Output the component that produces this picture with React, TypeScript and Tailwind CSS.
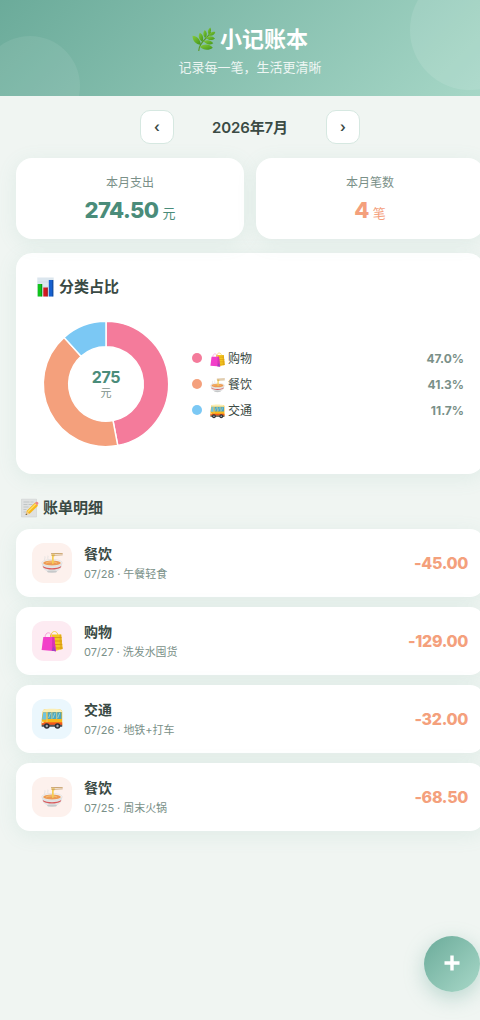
import React from 'react';

type IconProps = { className?: string };

function LeafIcon({ className }: IconProps) {
  return (
    <svg viewBox="0 0 24 24" className={className} aria-hidden="true">
      <defs>
        <linearGradient id="leaf" x1="0" y1="0" x2="1" y2="1">
          <stop offset="0" stopColor="#86cc3a" />
          <stop offset="1" stopColor="#429518" />
        </linearGradient>
      </defs>
      <path d="M6.800 23.500c.3-4 3.200-8.500 6.400-11.500 2.200-2 4-3.800 5.200-6.500" fill="none" stroke="#5a9a28" strokeWidth="1.200" strokeLinecap="round" />
      <g fill="url(#leaf)">
        <path d="M.5 8.800c4.400.2 7.800 3.500 8.300 8.900C3.600 17.700.5 13.500.5 8.800z" />
        <path d="M7.800 5.800c3.200 1.700 4.200 5 2.600 8.900-3.500-1.700-4.600-5.500-2.600-8.900z" />
        <path d="M12.800 3c2.500 2.200 2.700 5.200.5 8-2.500-2.200-2.700-5.500-.5-8z" />
        <path d="M18.300.5c1.500 2.300.9 4.900-1.700 6.900-1.400-2.500-.7-5.200 1.700-6.900z" />
        <path d="M23.300 5c-1 3.200-3.400 4.300-6.700 3.500C17.800 5.500 20.300 4.300 23.300 5z" />
        <path d="M23 11.400c-3 2.500-6.200 2.200-9.100-.6 3-2.200 6.400-2 9.100.6z" />
        <path d="M21.300 16.200c-3.400 2.200-7.200 1.300-9.800-1.900 3.500-1.900 7.300-1.300 9.800 1.900z" />
        <path d="M20.800 20.800c-4.200 3.200-9.500 2.400-13-1 4.300-3.300 9.700-2.900 13 1z" />
      </g>
    </svg>
  );
}

function ChartIcon({ className }: IconProps) {
  return (
    <svg viewBox="0 0 18 20" className={className} aria-hidden="true">
      <rect x=".8" y=".5" width="16.400" height="19" fill="#dbe6ee" />
      <path d="M1 5h16M1 10h16M1 15h16" stroke="#c5d4df" strokeWidth=".5" />
      <rect x="1.200" y="7" width="4.500" height="12.500" fill="#10c31b" />
      <rect x="6.800" y="10.500" width="4.500" height="9" fill="#d41820" />
      <rect x="12.300" y="3" width="4.500" height="16.500" fill="#1660cf" />
      <path d="M5.200 7v12.500M10.800 10.500v9M16.300 3v16.500" stroke="#000" strokeOpacity=".25" strokeWidth="1" />
    </svg>
  );
}

function MemoIcon({ className }: IconProps) {
  return (
    <svg viewBox="0 0 18 20" className={className} aria-hidden="true">
      <path d="M1 1.200h15V19H1z" fill="#dfe1e1" stroke="#c9cccc" strokeWidth=".5" />
      <path d="M3 4h6M10 4h3M3 6.500h4M8 6.500h4M3 9h5M3 11.500h3M3 14h2.500" stroke="#b5baba" strokeWidth=".7" />
      <path d="M5.300 16.700l1-4 8.200-8 3 3-8.300 8z" fill="#f6b81c" />
      <path d="M7.300 13.800l8.200-8" stroke="#ffe16a" strokeWidth="1.200" />
      <path d="M14.300 4.900l1.200-1c1.400-.8 3 .8 2.200 2.100l-1 1.200z" fill="#ee8585" />
      <path d="M5.300 16.700l1-3.500 2.700 2.500z" fill="#edc996" />
      <path d="M5.100 16.900l.4-1.500 1.100 1z" fill="#333" />
    </svg>
  );
}

function BagsIcon({ className }: IconProps) {
  return (
    <svg viewBox="0 0 22 22" className={className} aria-hidden="true">
      <path d="M10 6c0-6 7-6 7 0" fill="none" stroke="#f4cf4d" strokeWidth="1" />
      <path d="M9 4.500h11.200L21.600 19 14 21 9 18z" fill="#f4c821" />
      <path d="M11 7.500h9.500M12 11h9M13 14.500h8.200M14 18h7.500" stroke="#dc9e12" strokeWidth="1" />
      <path d="M18.500 4.500h1.700L21.600 19l-2.600.6z" fill="#d99b14" fillOpacity=".55" />
      <path d="M4 8c0-7 6.500-7 7 0" fill="none" stroke="#f7a1d8" strokeWidth="1" />
      <path d="M2.300 7h10.900l1.800 14.200L.6 20z" fill="#f23fc9" />
      <path d="M11.200 7h2L15 21.200l-4.200-.4z" fill="#d935b4" />
      <path d="M10.800 20.800l1.700-4.500 2.500 4.900z" fill="#9c45c2" />
    </svg>
  );
}

function NoodleIcon({ className }: IconProps) {
  return (
    <svg viewBox="0 0 22 22" className={className} aria-hidden="true">
      <path d="M4 8.500c-1.600-1.200.6-2 0-3.800M7 7c-1-1.200.5-2 0-3" fill="none" stroke="#dedede" strokeWidth=".8" strokeLinecap="round" />
      <path d="M.8 10.800c0 4.800 2.500 7.600 5.800 8.800h8.800c3.300-1.200 5.800-4 5.800-8.800z" fill="#e3e4e5" />
      <path d="M1.700 14c4.500 3 14.100 3 18.600 0l-.6 1.500c-4.300 2.700-13.100 2.700-17.400 0z" fill="#d95a5c" />
      <ellipse cx="11" cy="19.600" rx="5" ry="1.200" fill="#c6c9ca" />
      <ellipse cx="11" cy="10.800" rx="10.200" ry="3.400" fill="#f3f3f3" stroke="#cfd1d2" strokeWidth=".4" />
      <ellipse cx="11" cy="11" rx="8.800" ry="2.600" fill="#ec9a55" />
      <path d="M5 11c3-1.600 8-1.400 11 .1" fill="none" stroke="#f4bd72" strokeWidth="1.100" />
      <path d="M10.500 2.300h3.200v1.800l-1 .6v6.800c-.7.600-1.300.5-1.700 0V4.500z" fill="#f6cf55" />
      <path d="M10 1.200l11.700-.3v.9L10 2.300zM10.500 3l11.200-.5v.8l-11.200.5z" fill="#c39b62" />
    </svg>
  );
}

function BusIcon({ className }: IconProps) {
  return (
    <svg viewBox="0 0 22 22" className={className} aria-hidden="true">
      <path d="M3 1.500h15.500c2 0 2.700 1 2.700 2.600V18H.7v-6.500L1.800 3z" fill="#f9b91c" />
      <path d="M3 1.500c1.500-1 14.500-1 16 0 1.200.2 2 1 2.200 2.400H1.700C1.800 2.500 2.200 1.700 3 1.500z" fill="#fbeeb5" />
      <path d="M2.200 4.200h3.200v7.300H1z" fill="#6fc3de" />
      <path d="M6.500 4.200h14V11h-14z" fill="#4ea6bd" />
      <path d="M7.600 10l2-5M12 10l2-5M16.700 10l2-5" stroke="#8fd2de" strokeWidth="1" />
      <path d="M6 4v10M10.900 4v7M15.700 4v7" stroke="#e9d383" strokeWidth=".8" />
      <path d="M.7 14.300h20.500v2.700H.7z" fill="#f4581d" />
      <path d="M.7 16.800h20.500v2H.7z" fill="#50545a" />
      <circle cx="1.800" cy="14.300" r=".9" fill="#fff4b0" />
      <circle cx="5.800" cy="18" r="2.800" fill="#303238" />
      <circle cx="5.800" cy="18" r="1.200" fill="#a9adb2" />
      <circle cx="16.500" cy="18" r="2.800" fill="#303238" />
      <circle cx="16.500" cy="18" r="1.200" fill="#a9adb2" />
    </svg>
  );
}

const categories = {
  shopping: { name: '购物', color: '#f47b9b', tint: 'bg-[#fdebf2]', dot: 'bg-[#f47b9b]', Icon: BagsIcon },
  food: { name: '餐饮', color: '#f4a07c', tint: 'bg-[#fdf1ed]', dot: 'bg-[#f4a07c]', Icon: NoodleIcon },
  traffic: { name: '交通', color: '#7bc8f4', tint: 'bg-[#ebf7fd]', dot: 'bg-[#7bc8f4]', Icon: BusIcon },
};

type CategoryKey = keyof typeof categories;

const shares: { key: CategoryKey; amount: number }[] = [
  { key: 'shopping', amount: 129 },
  { key: 'food', amount: 113.5 },
  { key: 'traffic', amount: 32 },
];

const records: { key: CategoryKey; date: string; note: string; amount: number }[] = [
  { key: 'food', date: '07/28', note: '午餐轻食', amount: 45 },
  { key: 'shopping', date: '07/27', note: '洗发水囤货', amount: 129 },
  { key: 'traffic', date: '07/26', note: '地铁+打车', amount: 32 },
  { key: 'food', date: '07/25', note: '周末火锅', amount: 68.5 },
];

const total = shares.reduce((sum, s) => sum + s.amount, 0);

function point(r: number, fraction: number) {
  const a = fraction * Math.PI * 2 - Math.PI / 2;
  return `${70 + r * Math.cos(a)} ${70 + r * Math.sin(a)}`;
}

function Donut() {
  let start = 0;
  return (
    <svg viewBox="0 0 140 140" className="w-[140px] h-[140px] shrink-0">
      {shares.map((s) => {
        const from = start;
        const to = start + s.amount / total;
        start = to;
        const large = to - from > 0.5 ? 1 : 0;
        return (
          <path
            key={s.key}
            d={`M${point(62.7, from)}A62.7 62.7 0 ${large} 1 ${point(62.7, to)}L${point(37.3, to)}A37.3 37.3 0 ${large} 0 ${point(37.3, from)}Z`}
            fill={categories[s.key].color}
            stroke="#fff"
            strokeWidth="1.500"
          />
        );
      })}
      <text x="70" y="68.500" textAnchor="middle" fontSize="16" fontWeight="700" letterSpacing="-0.3" fill="#4a8c7a">{Math.round(total)}</text>
      <text x="70" y="83" textAnchor="middle" fontSize="11" fill="#7a9088">元</text>
    </svg>
  );
}

const card = 'bg-white shadow-[0_4px_20px_rgba(107,171,154,0.12)]';

export default function App() {
  return (
    <div className="w-full h-[1020px] overflow-hidden bg-[#f0f5f2] text-[#3a4a44] font-['Inter','Noto_Sans_CJK_SC',sans-serif]">
      <div className="w-[500px] h-full relative">
        {/* Header */}
        <header className="relative h-24 overflow-hidden pt-6 text-center text-white bg-[linear-gradient(135deg,#6bab9a_0%,#a8d8c8_100%)]">
          <div className="absolute -top-[30px] -right-[30px] w-[120px] h-[120px] rounded-full bg-white/10" />
          <div className="absolute -bottom-10 -left-5 w-[100px] h-[100px] rounded-full bg-white/8" />
          <h1 className="flex items-center justify-center gap-1 text-[22px] leading-[30px] font-bold">
            <LeafIcon className="w-6 h-6" />
            小记账本
          </h1>
          <p className="mt-[3px] text-[13px] leading-5 opacity-85">记录每一笔，生活更清晰</p>
        </header>

        <main className="px-4 pt-3.5">
          {/* Month switcher */}
          <div className="flex items-center justify-center gap-4">
            <button className="w-[34px] h-[34px] rounded-[10px] border border-[#d6e8e1] bg-white text-sm leading-none font-semibold">‹</button>
            <span className="w-[120px] pt-0.5 text-center text-[15px] font-semibold tracking-[-0.01em]">2026年7月</span>
            <button className="w-[34px] h-[34px] rounded-[10px] border border-[#d6e8e1] bg-white text-sm leading-none font-semibold">›</button>
          </div>

          {/* Summary */}
          <div className="mt-3.5 grid grid-cols-2 gap-3">
            <div className={`${card} h-[81px] rounded-2xl pt-4 text-center`}>
              <div className="text-xs leading-[18px] text-[#7a9088]">本月支出</div>
              <div className="mt-1 text-[22px] leading-7 font-extrabold tracking-[-0.025em] text-[#4a8c7a]">
                {total.toFixed(2)}<span className="ml-1 text-[13px] font-normal tracking-normal">元</span>
              </div>
            </div>
            <div className={`${card} h-[81px] rounded-2xl pt-4 text-center`}>
              <div className="text-xs leading-[18px] text-[#7a9088]">本月笔数</div>
              <div className="mt-1 text-[22px] leading-7 font-extrabold tracking-[-0.025em] text-[#f4a07c]">
                {records.length}<span className="ml-1 text-[13px] font-normal tracking-normal">笔</span>
              </div>
            </div>
          </div>

          {/* Category share */}
          <section className={`${card} mt-3.5 rounded-2xl p-5`}>
            <h2 className="flex items-center gap-1 mb-3.5 text-[15px] leading-[27px] font-semibold">
              <ChartIcon className="w-[19px] h-5" />
              分类占比
            </h2>
            <div className="flex items-center gap-4">
              <Donut />
              <ul className="flex-1 flex flex-col gap-2 pt-0.5">
                {shares.map((s) => {
                  const { name, dot, Icon } = categories[s.key];
                  return (
                    <li key={s.key} className="flex items-center h-[18px] text-xs">
                      <span className={`w-2.5 h-2.5 -mt-0.5 rounded-full ${dot}`} />
                      <Icon className="ml-2 mr-[3px] w-[15px] h-[15px]" />
                      <span className="flex-1">{name}</span>
                      <span className="font-bold text-[#7a9088]">{((s.amount / total) * 100).toFixed(1)}%</span>
                    </li>
                  );
                })}
              </ul>
            </div>
          </section>

          {/* Records */}
          <h2 className="flex items-center gap-1 mt-5 mb-2 pl-1 text-[15px] leading-[27px] font-semibold">
            <MemoIcon className="w-[19px] h-5" />
            账单明细
          </h2>
          <ul className="flex flex-col gap-2.5">
            {records.map((r) => {
              const { name, tint, Icon } = categories[r.key];
              return (
                <li key={r.date} className={`${card} flex items-center gap-3 h-[68px] px-4 rounded-[14px]`}>
                  <div className={`w-10 h-10 rounded-xl flex items-center justify-center ${tint}`}>
                    <Icon className="w-[22px] h-[22px]" />
                  </div>
                  <div className="flex-1">
                    <div className="text-sm leading-[21px] font-semibold">{name}</div>
                    <div className="mt-0.5 text-[11px] leading-[17px] tracking-[-0.005em] text-[#7a9088]">{r.date} · {r.note}</div>
                  </div>
                  <div className="text-base font-extrabold tracking-[-0.02em] text-[#f4a07c]">-{r.amount.toFixed(2)}</div>
                </li>
              );
            })}
          </ul>
        </main>

        {/* Add button */}
        <button className="absolute right-5 bottom-7 w-14 h-14 rounded-full flex items-center justify-center text-white bg-[linear-gradient(135deg,#6bab9a,#a8d8c8)] shadow-[0_6px_20px_rgba(107,171,154,0.4)]">
          <svg viewBox="0 0 16 16" className="w-4 h-4 -mt-0.5" aria-label="记一笔">
            <path d="M8 .5v15M.5 8h15" stroke="currentColor" strokeWidth="3.400" />
          </svg>
        </button>
      </div>
    </div>
  );
}
